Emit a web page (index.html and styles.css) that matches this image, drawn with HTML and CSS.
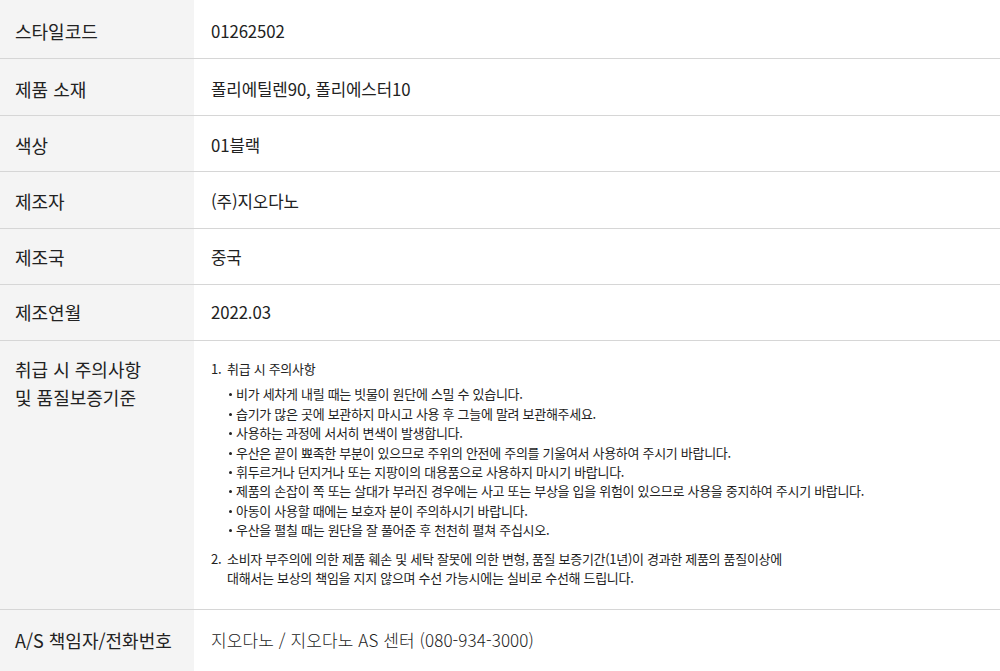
FILE: index.html
```html
<!DOCTYPE html>
<html lang="ko">
<head>
<meta charset="utf-8">
<link rel="stylesheet" href="styles.css">
</head>
<body>
<div class="spec">
  <div class="row h59"><div class="label">스타일코드</div><div class="value">01262502</div></div>
  <div class="row h57"><div class="label">제품 소재</div><div class="value">폴리에틸렌90, 폴리에스터10</div></div>
  <div class="row h56"><div class="label">색상</div><div class="value">01블랙</div></div>
  <div class="row h57 up1"><div class="label">제조자</div><div class="value">(주)지오다노</div></div>
  <div class="row h56 up1"><div class="label">제조국</div><div class="value">중국</div></div>
  <div class="row h56 up3"><div class="label">제조연월</div><div class="value">2022.03</div></div>
  <div class="row tall">
    <div class="label multi">취급 시 주의사항<br>및 품질보증기준</div>
    <div class="value notes">
      <ol class="olist">
        <li>취급 시 주의사항
          <ul class="ulist">
            <li>비가 세차게 내릴 때는 빗물이 원단에 스밀 수 있습니다.</li>
            <li>습기가 많은 곳에 보관하지 마시고 사용 후 그늘에 말려 보관해주세요.</li>
            <li>사용하는 과정에 서서히 변색이 발생합니다.</li>
            <li>우산은 끝이 뾰족한 부분이 있으므로 주위의 안전에 주의를 기울여서 사용하여 주시기 바랍니다.</li>
            <li>휘두르거나 던지거나 또는 지팡이의 대용품으로 사용하지 마시기 바랍니다.</li>
            <li>제품의 손잡이 쪽 또는 살대가 부러진 경우에는 사고 또는 부상을 입을 위험이 있으므로 사용을 중지하여 주시기 바랍니다.</li>
            <li>아동이 사용할 때에는 보호자 분이 주의하시기 바랍니다.</li>
            <li>우산을 펼칠 때는 원단을 잘 풀어준 후 천천히 펼쳐 주십시오.</li>
          </ul>
        </li>
        <li class="second">소비자 부주의에 의한 제품 훼손 및 세탁 잘못에 의한 변형, 품질 보증기간(1년)이 경과한 제품의 품질이상에<br>대해서는 보상의 책임을 지지 않으며 수선 가능시에는 실비로 수선해 드립니다.</li>
      </ol>
    </div>
  </div>
  <div class="row last"><div class="label">A/S 책임자/전화번호</div><div class="value light">지오다노 / 지오다노 AS 센터 (080-934-3000)</div></div>
</div>
</body>
</html>
```

FILE: styles.css
```css
html, body {
  margin: 0;
  padding: 0;
  background: #ffffff;
}
body {
  font-family: "Noto Sans CJK KR", "Noto Sans", sans-serif;
  color: #222222;
  width: 1000px;
  height: 671px;
  overflow: hidden;
}
.spec {
  display: flex;
  flex-direction: column;
}
.row {
  display: grid;
  grid-template-columns: 194px 1fr;
  border-bottom: 1px solid #d6d6d6;
  box-sizing: border-box;
}
.h59 { height: 59px; }
.h57 { height: 57px; }
.h56 { height: 56px; }
.label {
  background: #f4f4f4;
  padding-left: 15px;
  display: flex;
  align-items: center;
  font-size: 18px;
  letter-spacing: 0;
  padding-top: 3px;
}
.value {
  padding-left: 17px;
  display: flex;
  align-items: center;
  font-size: 16.8px;
  letter-spacing: -0.1px;
  padding-top: 3px;
}
.row.up1 .label, .row.up1 .value {
  padding-top: 1px;
}
.row.up3 .label, .row.up3 .value {
  padding-top: 0;
  padding-bottom: 2px;
}
.row.tall {
  height: 269px;
}
.label.multi {
  align-items: flex-start;
  line-height: 28px;
  padding-top: 14px;
}
.value.notes {
  align-items: flex-start;
  padding-top: 18px;
  font-size: 13px;
  line-height: 19.4px;
  letter-spacing: -0.3px;
}
.olist {
  margin: 0;
  padding-left: 0;
  list-style: none;
  counter-reset: n;
}
.olist > li {
  counter-increment: n;
  position: relative;
  padding-left: 16px;
}
.olist > li::before {
  content: counter(n) ".";
  position: absolute;
  left: 0;
  top: 0;
}
.olist > li.second {
  margin-top: 9px;
}
.ulist {
  margin: 6px 0 0 0;
  padding-left: 9px;
  list-style: none;
}
.ulist > li {
  position: relative;
}
.ulist > li::before {
  content: "";
  position: absolute;
  left: -7px;
  top: 9px;
  width: 3px;
  height: 3px;
  border-radius: 50%;
  background: #222222;
}
.row.last {
  height: 62px;
  border-bottom: none;
}
.row.last .label, .row.last .value {
  padding-top: 0;
  padding-bottom: 3px;
}
.value.light {
  font-size: 17px;
  font-weight: 300;
  letter-spacing: 0.1px;
}
```
